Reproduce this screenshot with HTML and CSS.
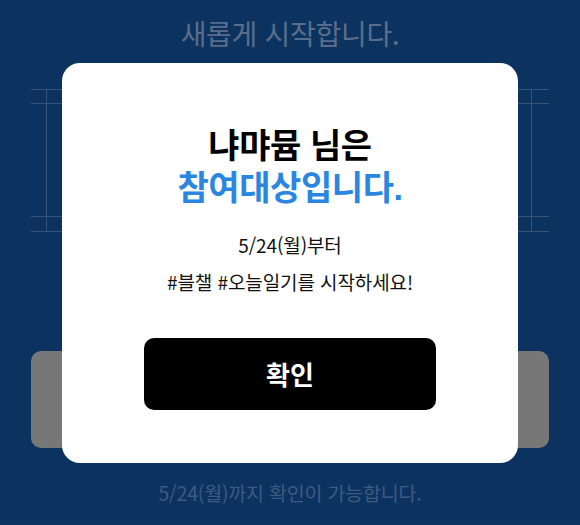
FILE: index.html
```html
<!DOCTYPE html>
<html lang="ko">
<head>
<meta charset="utf-8">
<link rel="stylesheet" href="styles.css">
</head>
<body>
<div class="screen">
  <h1 class="headline">새롭게 시작합니다.</h1>
  <div class="frame"><div class="frame-mid"></div></div>
  <div class="gray-box"></div>
  <p class="footnote">5/24(월)까지 확인이 가능합니다.</p>
</div>
<div class="overlay">
  <div class="modal">
    <h2 class="modal-title">냐먀뮴 님은<br><span class="accent">참여대상입니다.</span></h2>
    <p class="modal-body">5/24(월)부터<br>#블챌 #오늘일기를 시작하세요!</p>
    <button class="confirm">확인</button>
  </div>
</div>
</body>
</html>
```
FILE: styles.css
```css
html, body {
  margin: 0;
  padding: 0;
  height: 100%;
}
body {
  background: #0c3360;
  font-family: "Noto Sans CJK KR", "Noto Sans", sans-serif;
  overflow: hidden;
}
.screen {
  padding: 0 31px;
}
.headline {
  margin: 0;
  padding-top: 15px;
  font-size: 28px;
  line-height: 36px;
  font-weight: 400;
  color: #5a6e8b;
  text-align: center;
  letter-spacing: -0.3px;
}
.frame {
  margin-top: 38px;
  height: 141px;
  border-top: 1px solid #3a5478;
  border-bottom: 1px solid #3a5478;
  background:
    linear-gradient(#3a5478, #3a5478) 15px 0 / 1px 100% no-repeat,
    linear-gradient(#3a5478, #3a5478) calc(100% - 17px) 0 / 1px 100% no-repeat;
}
.frame-mid {
  margin-top: 13px;
  height: 112px;
  border-top: 1px solid #3a5478;
  border-bottom: 1px solid #3a5478;
}
.gray-box {
  margin-top: 119px;
  height: 97px;
  border-radius: 10px;
  background: #777;
}
.footnote {
  margin: 32px 0 0;
  font-size: 19.5px;
  line-height: 26px;
  color: #3f5a80;
  text-align: center;
  letter-spacing: -0.2px;
}
.overlay {
  position: fixed;
  inset: 0;
  display: flex;
  align-items: center;
  justify-content: center;
}
.modal {
  box-sizing: border-box;
  width: 456px;
  height: 400px;
  border-radius: 18px;
  background: #fff;
  padding-top: 62px;
  display: flex;
  flex-direction: column;
  align-items: center;
}
.modal-title {
  margin: 0;
  font-family: "Liberation Sans", "Noto Sans CJK KR", sans-serif;
  font-size: 34px;
  line-height: 42px;
  font-weight: 700;
  color: #000;
  text-align: center;
  letter-spacing: -0.4px;
}
.accent {
  color: #2a86e0;
}
.modal-body {
  margin: 17px 0 0;
  font-size: 19px;
  line-height: 37px;
  color: #111;
  text-align: center;
  letter-spacing: -0.1px;
}
.confirm {
  margin-top: 38px;
  width: 292px;
  height: 72px;
  border: 0;
  border-radius: 10px;
  background: #000;
  color: #fff;
  font-family: inherit;
  font-size: 26px;
  font-weight: 700;
}
```
